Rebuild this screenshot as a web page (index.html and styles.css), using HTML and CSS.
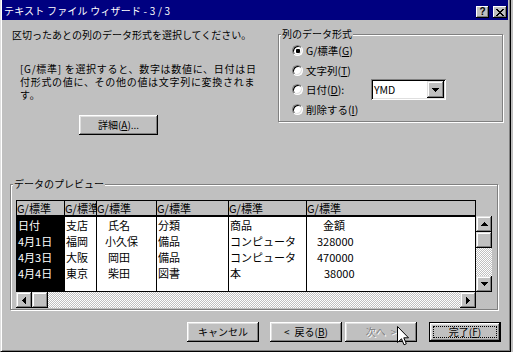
FILE: index.html
```html
<!DOCTYPE html>
<html lang="ja">
<head>
<meta charset="utf-8">
<title>テキスト ファイル ウィザード - 3 / 3</title>
<link rel="stylesheet" href="styles.css">
</head>
<body>
<div class="dialog">
  <div class="titlebar">
    <span class="title">テキスト ファイル ウィザード - 3 / 3</span>
    <div class="tbtns">
      <span class="tbtn help">?</span>
      <span class="tbtn close"><svg width="8" height="7" viewBox="0 0 8 7"><path d="M0 0h2v1h1v1h2V1h1V0h2v1H7v1H6v1H5v1h1v1h1v1h1v1H6V6H5V5H3v1H2v1H0V6h1V5h1V4h1V3H2V2H1V1H0z"/></svg></span>
    </div>
  </div>

  <div class="content">
    <div class="top">
      <div class="intro">
        <p class="lead">区切ったあとの列のデータ形式を選択してください。</p>
        <p class="desc">[G/標準] を選択すると、数字は数値に、日付は日<br>付形式の値に、その他の値は文字列に変換されま<br>す。</p>
        <button class="btn detail" type="button">詳細(<u>A</u>)...</button>
      </div>

      <div class="group fmt">
        <span class="legend">列のデータ形式</span>
        <div class="radio"><span class="rb on"></span><span>G/標準(<u>G</u>)</span></div>
        <div class="radio"><span class="rb"></span><span>文字列(<u>T</u>)</span></div>
        <div class="radio"><span class="rb"></span><span class="date-label">日付(<u>D</u>):</span>
          <div class="combo"><span class="combo-val">YMD</span><span class="combo-btn"><svg width="7" height="4" viewBox="0 0 7 4"><path d="M0 0h7v1H6v1H5v1H4v1H3V3H2V2H1V1H0z"/></svg></span></div>
        </div>
        <div class="radio"><span class="rb"></span><span>削除する(<u>I</u>)</span></div>
      </div>
    </div>

    <div class="group preview">
      <span class="legend">データのプレビュー</span>
      <div class="pv">
        <div class="pv-main">
          <div class="cols">
            <div class="col w1 sel">
              <div class="hd">G/標準</div>
              <div class="cells">
                <div class="cell">日付</div>
                <div class="cell">4月1日</div>
                <div class="cell">4月3日</div>
                <div class="cell">4月4日</div>
              </div>
            </div>
            <div class="col w2">
              <div class="hd">G/標準</div>
              <div class="cells">
                <div class="cell">支店</div>
                <div class="cell">福岡</div>
                <div class="cell">大阪</div>
                <div class="cell">東京</div>
              </div>
            </div>
            <div class="col w3">
              <div class="hd">G/標準</div>
              <div class="cells">
                <div class="cell in11">氏名</div>
                <div class="cell in8">小久保</div>
                <div class="cell in11">岡田</div>
                <div class="cell in11">柴田</div>
              </div>
            </div>
            <div class="col w4">
              <div class="hd">G/標準</div>
              <div class="cells">
                <div class="cell">分類</div>
                <div class="cell">備品</div>
                <div class="cell">備品</div>
                <div class="cell">図書</div>
              </div>
            </div>
            <div class="col w5">
              <div class="hd">G/標準</div>
              <div class="cells">
                <div class="cell">商品</div>
                <div class="cell">コンピュータ</div>
                <div class="cell">コンピュータ</div>
                <div class="cell">本</div>
              </div>
            </div>
            <div class="col w6">
              <div class="hd">G/標準</div>
              <div class="cells">
                <div class="cell in16">金額</div>
                <div class="cell in10">328000</div>
                <div class="cell in10">470000</div>
                <div class="cell in17">38000</div>
              </div>
            </div>
          </div>
          <div class="hscroll">
            <span class="sbtn"><svg width="4" height="7" viewBox="0 0 4 7"><path d="M0 3h1V2h1V1h1V0h1v7H3V6H2V5H1V4H0z"/></svg></span>
            <span class="sthumb"></span>
            <span class="strack"></span>
            <span class="sbtn"><svg width="4" height="7" viewBox="0 0 4 7"><path d="M0 0h1v1h1v1h1v1h1v1H3v1H2v1H1v1H0z"/></svg></span>
          </div>
        </div>
        <div class="pv-side">
          <div class="side-gap"></div>
          <div class="vscroll">
            <span class="sbtn"><svg width="7" height="4" viewBox="0 0 7 4"><path d="M3 0h1v1h1v1h1v1h1v1H0V3h1V2h1V1h1z"/></svg></span>
            <span class="sthumb"></span>
            <span class="strack"></span>
            <span class="sbtn"><svg width="7" height="4" viewBox="0 0 7 4"><path d="M0 0h7v1H6v1H5v1H4v1H3V3H2V2H1V1H0z"/></svg></span>
          </div>
          <div class="corner"></div>
        </div>
      </div>
    </div>

    <div class="actions">
      <button class="btn" type="button">キャンセル</button>
      <button class="btn back" type="button">&lt;&ensp;戻る(<u>B</u>)</button>
      <button class="btn next" type="button" disabled>次へ&ensp;&gt;</button>
      <button class="btn default" type="button">完了(<u>F</u>)</button>
    </div>
  </div>

  <svg class="cursor" width="12" height="20" viewBox="0 0 12 20"><path d="M0.5 0.5V16.5L4.5 12.8L7 18.8L9.3 17.8L6.8 11.8H11.5Z" fill="#fff" stroke="#000" stroke-width="1"/></svg>
</div>
</body>
</html>
```

FILE: styles.css
```css
* { box-sizing: border-box; }

html, body {
  margin: 0;
  padding: 0;
  background: #c0c0c0;
}

body {
  font-family: "Noto Sans CJK JP", "Noto Sans", sans-serif;
  font-size: 10px;
  color: #000;
}

p { margin: 0; }

u { text-decoration: underline; text-underline-offset: 1px; }

.dialog {
  position: relative;
  width: 511px;
  height: 352px;
  background: #c0c0c0;
  border-left: 1px solid #dfdfdf;
  border-right: 1px solid #000;
  border-bottom: 1px solid #000;
  box-shadow: inset 1px 0 0 #fff, inset -1px -1px 0 #808080;
  padding: 0 2px 0 1px;
  display: flex;
  flex-direction: column;
}

/* ---------- title bar ---------- */
.titlebar {
  height: 20px;
  background: #000080;
  color: #fff;
  display: flex;
  align-items: flex-start;
  justify-content: space-between;
  padding: 2px 1px 0 2px;
  flex: none;
}

.title {
  font-size: 10px;
  line-height: 18px;
  letter-spacing: 0.2px;
  white-space: nowrap;
}

.tbtns {
  display: flex;
  gap: 4px;
  margin-top: 4px;
}

.tbtn {
  width: 14px;
  height: 12px;
  background: #c0c0c0;
  color: #000;
  box-shadow: inset -1px -1px 0 #000, inset 1px 1px 0 #fff, inset -2px -2px 0 #808080;
  display: flex;
  align-items: center;
  justify-content: center;
}

.tbtn.help {
  width: 13px;
  font-family: "Liberation Sans", sans-serif;
  font-weight: bold;
  font-size: 10px;
  line-height: 12px;
}

.tbtn svg { display: block; }

/* ---------- common controls ---------- */
.btn {
  font: inherit;
  color: #000;
  background: #c0c0c0;
  border: none;
  padding: 0;
  margin: 0;
  height: 20px;
  line-height: 20px;
  box-shadow: inset -1px -1px 0 #000, inset 1px 1px 0 #fff, inset -2px -2px 0 #808080, inset 2px 2px 0 #dfdfdf;
  display: flex;
  align-items: center;
  justify-content: center;
  white-space: nowrap;
}

.group {
  position: relative;
  border: 1px solid #808080;
  box-shadow: 1px 1px 0 #fff, inset 1px 1px 0 #fff;
}

.legend {
  position: absolute;
  top: -8px;
  left: 2px;
  padding: 0 1px;
  background: #c0c0c0;
  line-height: 14px;
  white-space: nowrap;
}

/* ---------- content ---------- */
.content {
  padding: 0 5px 0 8px;
  display: flex;
  flex-direction: column;
}

.top {
  display: flex;
  height: 115px;
}

.intro {
  width: 268px;
  padding-left: 2px;
  display: flex;
  flex-direction: column;
}

.lead {
  margin-top: 8px;
  line-height: 13px;
  white-space: nowrap;
}

.desc {
  margin: 21px 0 0 8px;
  line-height: 13px;
  letter-spacing: 0.7px;
  white-space: nowrap;
}

.detail {
  margin: 14px 0 0 67px;
  width: 79px;
}

.fmt {
  flex: none;
  width: 225px;
  height: 88px;
  margin-top: 14px;
  padding: 6px 0 0 13px;
}

.radio {
  height: 19.5px;
  display: flex;
  align-items: center;
  gap: 3px;
  white-space: nowrap;
  font-size: 10.5px;
}

.rb {
  position: relative;
  flex: none;
  width: 11px;
  height: 11px;
  border-radius: 50%;
  background: #fff;
  border: 1px solid;
  border-color: #808080 #fff #fff #808080;
  box-shadow: inset 1px 1px 0 #000, inset -1px -1px 0 #dfdfdf;
}

.rb.on::after {
  content: "";
  position: absolute;
  left: 2.5px;
  top: 2.5px;
  width: 4px;
  height: 4px;
  border-radius: 1px;
  background: #000;
}

.date-label {
  width: 62px;
}

.combo {
  width: 75px;
  height: 21px;
  background: #fff;
  box-shadow: inset 1px 1px 0 #808080, inset -1px -1px 0 #fff, inset 2px 2px 0 #000, inset -2px -2px 0 #dfdfdf;
  display: flex;
  align-items: center;
  justify-content: space-between;
  padding: 2px;
}

.combo-val {
  padding-left: 1px;
}

.combo-btn {
  width: 17px;
  height: 17px;
  background: #c0c0c0;
  box-shadow: inset -1px -1px 0 #000, inset 1px 1px 0 #dfdfdf, inset -2px -2px 0 #808080, inset 2px 2px 0 #fff;
  display: flex;
  align-items: center;
  justify-content: center;
}

.combo-btn svg, .sbtn svg { display: block; }

/* ---------- preview ---------- */
.preview {
  width: 488px;
  height: 126px;
  margin-top: 49px;
  padding: 15px 0 0 5px;
}

.pv {
  display: flex;
  width: 476px;
  height: 108px;
}

.pv-main {
  width: 460px;
  display: flex;
  flex-direction: column;
}

.cols {
  display: flex;
  height: 92px;
  border: 1px solid #000;
  border-right: none;
  font-size: 11px;
}

.col {
  flex: none;
  display: flex;
  flex-direction: column;
  border-right: 1px solid #000;
  overflow: hidden;
}

.w1 { width: 48px; }
.w2 { width: 32px; }
.w3 { width: 60px; }
.w4 { width: 72px; }
.w5 { width: 78px; }
.w6 { width: 169px; }

.hd {
  height: 16px;
  line-height: 14px;
  background: #c0c0c0;
  border-bottom: 2px solid #000;
  white-space: nowrap;
}

.cells {
  flex: 1;
  background: #fff;
}

.sel .cells {
  background: #000;
  color: #fff;
}

.cell {
  height: 16px;
  line-height: 16px;
  white-space: nowrap;
  padding-left: 1px;
}

.in8 { padding-left: 8px; }
.in10 { padding-left: 10px; }
.in11 { padding-left: 11px; }
.in16 { padding-left: 16px; }
.in17 { padding-left: 17px; }

.hscroll {
  display: flex;
  height: 16px;
}

.vscroll {
  display: flex;
  flex-direction: column;
  height: 76px;
}

.pv-side {
  width: 16px;
  display: flex;
  flex-direction: column;
}

.side-gap { height: 16px; flex: none; }

.corner { flex: 1; }

.sbtn, .sthumb {
  flex: none;
  width: 16px;
  height: 16px;
  background: #c0c0c0;
  box-shadow: inset -1px -1px 0 #000, inset 1px 1px 0 #dfdfdf, inset -2px -2px 0 #808080, inset 2px 2px 0 #fff;
  display: flex;
  align-items: center;
  justify-content: center;
}

.strack {
  flex: 1;
  background: repeating-conic-gradient(#c0c0c0 0% 25%, #fff 0% 50%) 0 0 / 2px 2px;
}

/* ---------- action buttons ---------- */
.actions {
  display: flex;
  margin: 12px 0 0 177px;
}

.actions .btn { width: 72px; }

.actions .back { margin-left: 11px; }

.actions .next {
  margin-left: 3px;
  color: #808080;
  text-shadow: 1px 1px 0 #fff;
}

.actions .default {
  position: relative;
  margin-left: 12px;
  box-shadow: inset 0 0 0 1px #000, inset -2px -2px 0 #000, inset 2px 2px 0 #fff, inset -3px -3px 0 #808080, inset 3px 3px 0 #dfdfdf;
}

.actions .default::after {
  content: "";
  position: absolute;
  inset: 4px;
  border: 1px dotted #000;
}

.cursor {
  position: absolute;
  left: 396px;
  top: 326px;
}
```
